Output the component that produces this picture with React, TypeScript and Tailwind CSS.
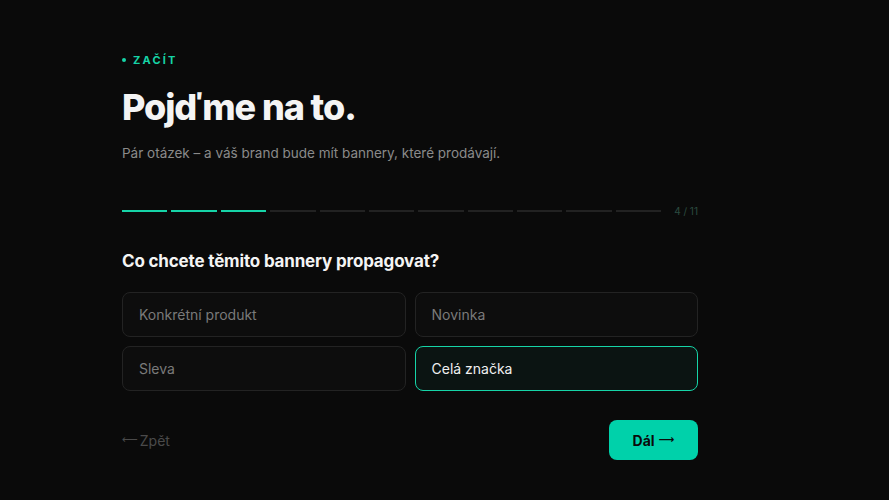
import { useState } from 'react'

const options = ['Konkrétní produkt', 'Novinka', 'Sleva', 'Celá značka']

export default function App() {
  const [picked, setPicked] = useState('Celá značka')
  const step = 4
  const total = 11

  return (
    <div className="min-h-[500px] w-full bg-[#0a0a0a] font-['Inter',sans-serif]">
      <div className="ml-[122px] w-[576px] pt-[52px]">
        {/* Eyebrow */}
        <div className="flex items-center gap-[7px] text-[11px] font-bold tracking-[0.2em] text-[#16d4a7]">
          <span className="h-[4px] w-[4px] rounded-full bg-[#16d4a7]" />
          ZAČÍT
        </div>

        <h1 className="mt-[16px] text-[36px] font-extrabold leading-[44px] tracking-[-0.03em] text-[#f4f4f4]">
          Pojďme na to.
        </h1>
        <p className="mt-[14px] text-[13.5px] text-[#8a8a8a]">
          Pár otázek – a váš brand bude mít bannery, které prodávají.
        </p>

        {/* Progress */}
        <div className="mt-[41px] flex items-center">
          <div className="flex flex-1 gap-[4px]">
            {Array.from({ length: total }).map((_, i) => (
              <div
                key={i}
                className={i < step - 1 ? 'h-[2px] flex-1 bg-[#16d4a7]' : 'h-[2px] flex-1 bg-[#222222]'}
              />
            ))}
          </div>
          <span className="ml-[13px] text-[10px] text-[#2c4a40]">
            {step} / {total}
          </span>
        </div>

        <h2 className="mt-[30px] text-[17px] font-bold tracking-[-0.01em] text-[#f4f4f4]">
          Co chcete těmito bannery propagovat?
        </h2>

        <div className="mt-[18px] grid grid-cols-2 gap-[9px]">
          {options.map((o) => {
            const active = o === picked
            return (
              <button
                key={o}
                onClick={() => setPicked(o)}
                className={
                  active
                    ? 'h-[45px] rounded-[8px] border border-[#16d4a7] bg-[#0b1412] px-[16px] text-left text-[14px] text-[#f0f0f0]'
                    : 'h-[45px] rounded-[8px] border border-[#232323] bg-[#0d0d0d] px-[16px] text-left text-[14px] text-[#7a7a7a]'
                }
              >
                {o}
              </button>
            )
          })}
        </div>

        <div className="mt-[29px] flex items-center justify-between">
          <button className="flex items-center gap-[2px] text-[14px] text-[#4a4a4a]">
            <span className="font-['DejaVu_Sans',sans-serif] text-[11px]">⟵</span>
            Zpět
          </button>
          <button className="flex h-[40px] w-[89px] items-center justify-center gap-[4px] rounded-[8px] bg-[#00d1aa] text-[14px] font-bold text-[#0a0a0a]">
            Dál
            <span className="font-['DejaVu_Sans',sans-serif] text-[11px] font-bold">⟶</span>
          </button>
        </div>
      </div>
    </div>
  )
}
